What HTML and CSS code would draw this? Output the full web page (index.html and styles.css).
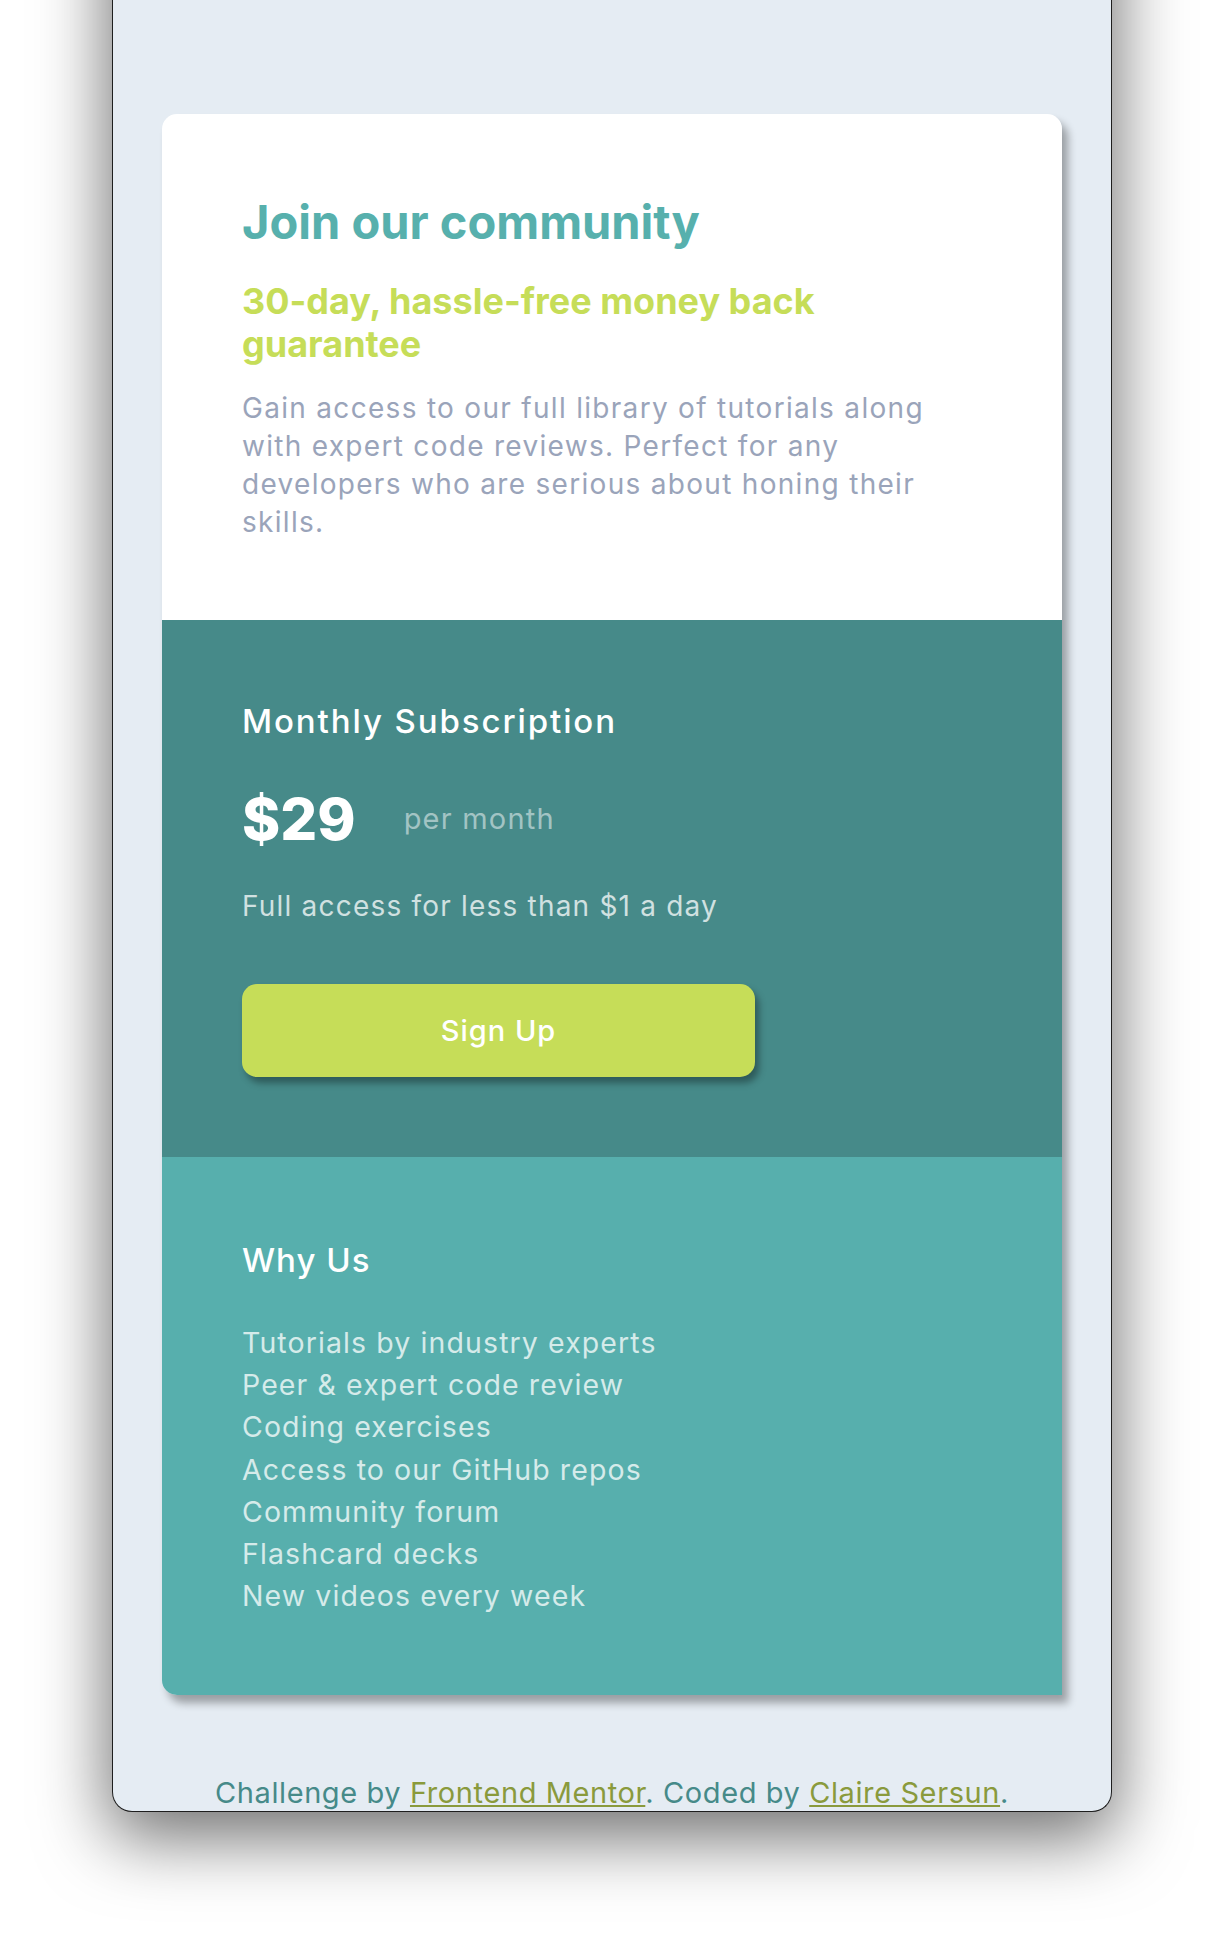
FILE: index.html
```html
<!DOCTYPE html>
<html lang="en">
<head>
<meta charset="utf-8">
<title>Single price grid component</title>
<link rel="stylesheet" href="styles.css">
</head>
<body>
<div class="stage">
  <div class="window">
    <main class="card">
      <section class="intro">
        <h1 class="intro-title">Join our community</h1>
        <h2 class="intro-sub">30-day, hassle-free money back guarantee</h2>
        <p class="intro-text">Gain access to our full library of tutorials along with expert code reviews. Perfect for any developers who are serious about honing their skills.</p>
      </section>
      <section class="sub">
        <h2 class="sub-title">Monthly Subscription</h2>
        <div class="price-row">
          <span class="price">$29</span>
          <span class="per">per month</span>
        </div>
        <p class="sub-note">Full access for less than $1 a day</p>
        <button class="signup" type="button">Sign Up</button>
      </section>
      <section class="why">
        <h2 class="why-title">Why Us</h2>
        <ul class="why-list">
          <li>Tutorials by industry experts</li>
          <li>Peer &amp; expert code review</li>
          <li>Coding exercises</li>
          <li>Access to our GitHub repos</li>
          <li>Community forum</li>
          <li>Flashcard decks</li>
          <li>New videos every week</li>
        </ul>
      </section>
    </main>
    <footer class="attribution">Challenge by <a href="#">Frontend Mentor</a>. Coded by <a href="#">Claire Sersun</a>.</footer>
  </div>
</div>
</body>
</html>
```

FILE: styles.css
```css
* {
  box-sizing: border-box;
}

html, body {
  margin: 0;
  padding: 0;
  background: #ffffff;
}

body {
  font-family: "Inter", "Liberation Sans", sans-serif;
  height: 1960px;
  overflow: hidden;
}

.stage {
  display: flex;
  justify-content: center;
}

.window {
  width: 1000px;
  height: 1932px;
  margin-top: -120px;
  background: #e5ecf3;
  border: 1px solid #1e1e1e;
  border-top: none;
  border-radius: 0 0 20px 20px;
  box-shadow: 0 22px 70px 4px rgba(0, 0, 0, 0.56);
  overflow: hidden;
  display: flex;
  flex-direction: column;
  align-items: center;
  padding-top: 234px;
}

.card {
  width: 900px;
  border-radius: 15px 15px 0 15px;
  box-shadow: 6px 8px 9px rgba(0, 0, 0, 0.33);
  overflow: hidden;
}

.intro {
  background: #ffffff;
  height: 506px;
  padding: 80px 80px 0;
}

.intro-title {
  margin: 0;
  font-size: 47px;
  line-height: 56px;
  font-weight: 700;
  color: #57b0ad;
}

.intro-sub {
  margin: 30px 0 0;
  max-width: 620px;
  font-size: 36px;
  line-height: 43px;
  font-weight: 700;
  color: #c6dd58;
}

.intro-text {
  margin: 23px 0 0;
  max-width: 700px;
  font-size: 28px;
  line-height: 38px;
  letter-spacing: 1.3px;
  font-weight: 400;
  color: #9aa4ba;
}

.sub {
  background: #468a89;
  height: 537px;
  padding: 81px 80px 0;
  color: #ffffff;
}

.sub-title {
  margin: 0;
  font-size: 33px;
  line-height: 40px;
  letter-spacing: 1.9px;
  font-weight: 500;
}

.price-row {
  margin-top: 46px;
  display: flex;
  align-items: center;
  gap: 48px;
  height: 64px;
}

.price {
  font-size: 58px;
  line-height: 64px;
  font-weight: 800;
}

.per {
  font-size: 29px;
  line-height: 36px;
  letter-spacing: 1.2px;
  color: rgba(255, 255, 255, 0.5);
}

.sub-note {
  margin: 36px 0 0;
  font-size: 28px;
  line-height: 38px;
  letter-spacing: 1.2px;
  color: rgba(255, 255, 255, 0.75);
}

.signup {
  display: block;
  margin-top: 59px;
  width: 513px;
  height: 93px;
  border: none;
  border-radius: 15px;
  background: #c6dd58;
  color: #ffffff;
  font-family: inherit;
  font-size: 29px;
  letter-spacing: 1px;
  font-weight: 500;
  box-shadow: 4px 6px 7px rgba(0, 0, 0, 0.35);
}

.why {
  background: #57afad;
  height: 539px;
  padding: 83px 80px 0;
  color: #ffffff;
}

.why-title {
  margin: 0;
  font-size: 33px;
  line-height: 40px;
  letter-spacing: 1px;
  font-weight: 500;
}

.why-list {
  margin: 42px 0 0;
  padding: 0;
  list-style: none;
  font-size: 28.5px;
  line-height: 42.2px;
  letter-spacing: 1.1px;
  color: rgba(255, 255, 255, 0.75);
}

.attribution {
  margin-top: 80px;
  font-size: 29px;
  line-height: 36px;
  letter-spacing: 0.6px;
  color: #468a89;
  text-align: center;
}

.attribution a {
  color: #8a9a3c;
  text-decoration: underline;
}
```
